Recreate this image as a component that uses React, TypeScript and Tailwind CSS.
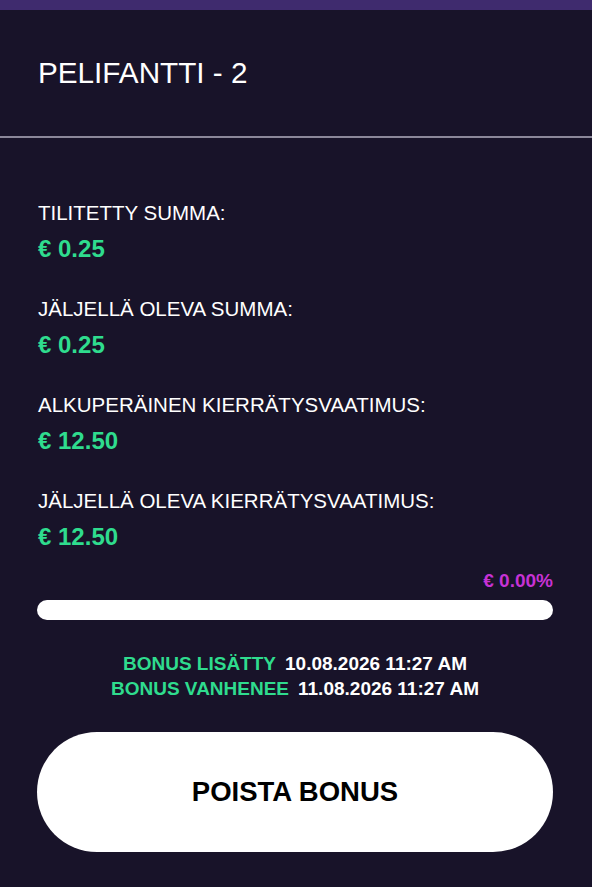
const rows = [
  { label: "TILITETTY SUMMA:", value: "€ 0.25" },
  { label: "JÄLJELLÄ OLEVA SUMMA:", value: "€ 0.25" },
  { label: "ALKUPERÄINEN KIERRÄTYSVAATIMUS:", value: "€ 12.50" },
  { label: "JÄLJELLÄ OLEVA KIERRÄTYSVAATIMUS:", value: "€ 12.50" }
]

const dates = [
  { label: "BONUS LISÄTTY", value: "10.08.2026 11:27 AM" },
  { label: "BONUS VANHENEE", value: "11.08.2026 11:27 AM" }
]

export default function App() {
  return (
    <div
      className="min-h-[887px] w-full bg-[#181329] text-white"
      style={{ fontFamily: '"Liberation Sans", Arial, sans-serif' }}
    >
      <div className="h-[10px] bg-[#3f2b6e]" />
      <div className="flex h-[126px] items-center px-[38px]">
        <h1 className="text-[29.7px] leading-[36px] font-normal">PELIFANTTI - 2</h1>
      </div>
      <div className="h-[2px] bg-[#8b8799]" />

      <div className="pl-[37px] pr-[39px] pt-[63px]">
        <div className="flex flex-col gap-[36px]">
          {rows.map((row) => (
            <div key={row.label} className="pl-px">
              <p className="text-[20.5px] leading-[24px]">{row.label}</p>
              <p className="mt-[12px] text-[24px] leading-[24px] font-bold text-[#2fdc8e]">{row.value}</p>
            </div>
          ))}
        </div>

        <p className="mt-[20px] text-right text-[19px] leading-[24px] font-bold text-[#c632d4]">€ 0.00%</p>
        <div className="mt-[7px] h-[20px] w-full rounded-full bg-white" />

        <div className="mt-[31px] flex flex-col items-center">
          {dates.map((d) => (
            <p key={d.label} className="text-[19px] leading-[25px] font-bold">
              <span className="text-[#2fdc8e]">{d.label}</span>
              <span className="ml-[9px]">{d.value}</span>
            </p>
          ))}
        </div>

        <button className="mt-[31px] flex h-[120px] w-full items-center justify-center rounded-full bg-white text-[27.5px] font-bold text-black">
          POISTA BONUS
        </button>
      </div>
    </div>
  )
}
